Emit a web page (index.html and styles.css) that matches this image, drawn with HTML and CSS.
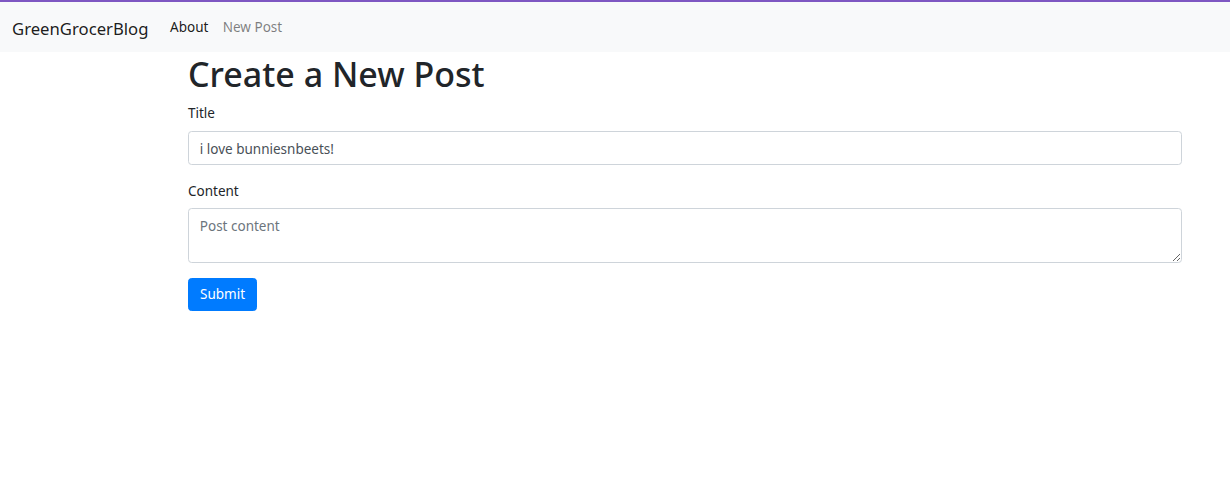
FILE: index.html
```html
<!DOCTYPE html>
<html lang="en">
<head>
<meta charset="utf-8">
<title>GreenGrocerBlog</title>
<link rel="stylesheet" href="styles.css">
</head>
<body>
<nav class="navbar">
  <a class="brand" href="#">GreenGrocerBlog</a>
  <ul class="nav">
    <li><a class="nav-link active" href="#">About</a></li>
    <li><a class="nav-link" href="#">New Post</a></li>
  </ul>
</nav>
<main class="container">
  <h1 class="title">Create a New Post</h1>
  <form class="form">
    <div class="form-group">
      <label class="label" for="title">Title</label>
      <input class="control" id="title" type="text" value="i love bunniesnbeets!">
    </div>
    <div class="form-group">
      <label class="label" for="content">Content</label>
      <textarea class="control textarea" id="content" placeholder="Post content"></textarea>
    </div>
    <button class="btn" type="submit">Submit</button>
  </form>
</main>
</body>
</html>
```
FILE: styles.css
```css
* { box-sizing: border-box; }
html, body { margin: 0; padding: 0; }
body {
  font-family: "Noto Sans", "Open Sans", sans-serif;
  font-size: 13.5px;
  line-height: 21.6px;
  color: #212529;
  background: #fff;
  border-top: 2px solid #7e57c2;
}
.navbar {
  display: flex;
  align-items: center;
  height: 50px;
  padding: 2px 14px 0 12px;
  background: #f8f9fa;
}
.brand {
  font-size: 16.7px;
  line-height: 27px;
  color: rgba(0,0,0,.9);
  text-decoration: none;
  margin-right: 14.4px;
}
.nav {
  display: flex;
  list-style: none;
  margin: 0;
  padding: 0;
}
.nav-link {
  display: block;
  padding: 7.2px;
  color: rgba(0,0,0,.5);
  text-decoration: none;
}
.nav-link.active { color: rgba(0,0,0,.9); }
.container {
  width: 994px;
  margin-left: 188px;
}
.title {
  margin: 0 0 7.2px;
  padding-top: 1px;
  height: 43.2px;
  font-size: 34px;
  font-weight: 500;
  line-height: 43.2px;
}
.form { margin: 0; }
.form-group { margin-bottom: 14.4px; }
.label {
  display: inline-block;
  padding-top: 1px;
  height: 21.6px;
  margin-bottom: 7.2px;
}
.control {
  display: block;
  width: 100%;
  height: 34px;
  padding: 6.4px 10.8px 4.4px;
  font-family: inherit;
  font-size: 13.5px;
  line-height: 21.6px;
  color: #495057;
  background: #fff;
  border: 1px solid #ced4da;
  border-radius: 3.6px;
  margin: 0;
}
.control::placeholder { color: #6c757d; opacity: 1; }
.textarea {
  height: 55px;
  resize: vertical;
}
.btn {
  display: inline-block;
  height: 33px;
  padding: 2px 11px 0;
  font-family: inherit;
  font-size: 13.5px;
  line-height: 21.6px;
  color: #fff;
  background: #007bff;
  border: 1px solid #007bff;
  border-radius: 3.6px;
}
```
